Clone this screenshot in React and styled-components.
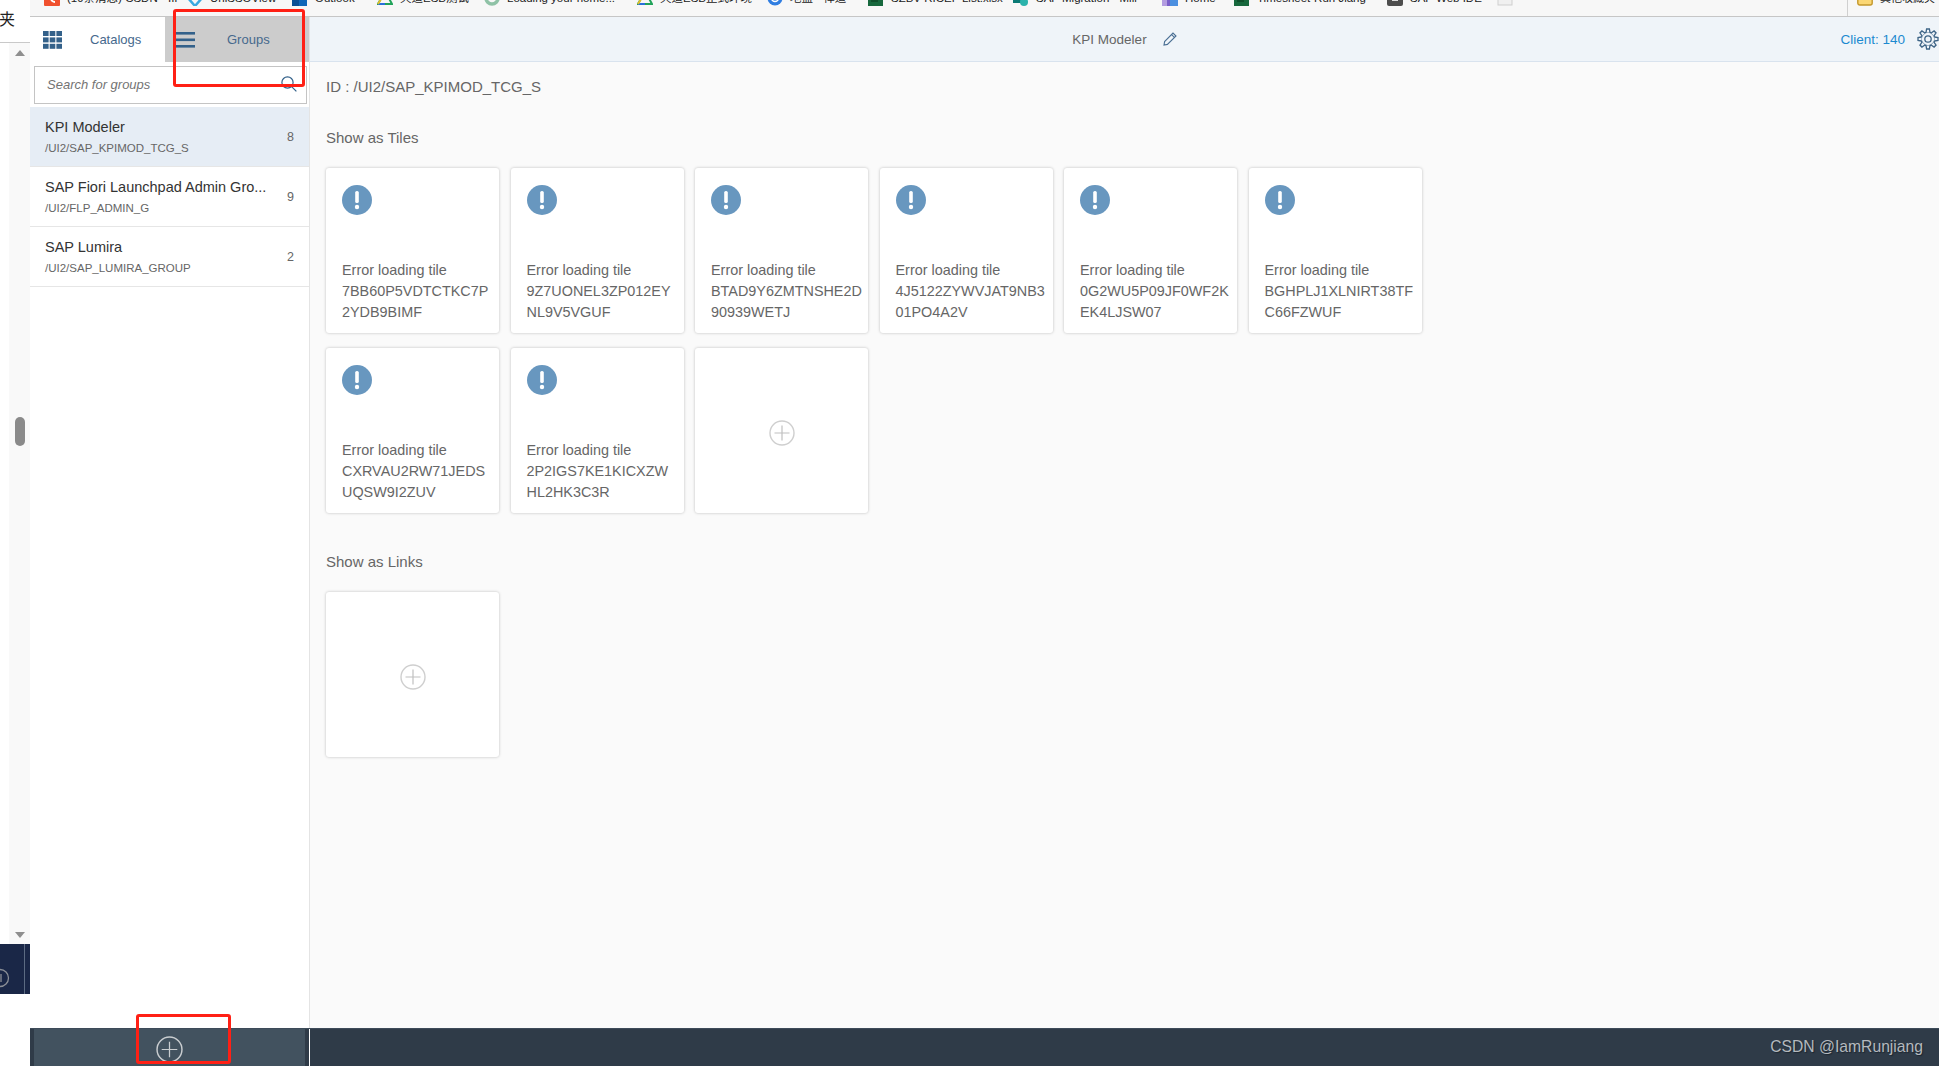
import styled, { createGlobalStyle } from "styled-components";

const FONT = `"Liberation Sans", "Noto Sans CJK SC", sans-serif`;

const GlobalStyle = createGlobalStyle`
    html, body {
        margin: 0;
        padding: 0;
        background: #ffffff;
        font-family: ${FONT};
    }
`;

const Page = styled.div`
    position: relative;
    width: 1939px;
    height: 1066px;
    overflow: hidden;
    display: flex;
`;

const LeftStrip = styled.div`
    flex: none;
    width: 30px;
    display: flex;
    flex-direction: column;
    background: #fff;
`;

const StripTab = styled.div`
    flex: none;
    height: 43px;
    box-sizing: border-box;
    border-bottom: 1px solid #c9c9c9;
    overflow: hidden;
    display: flex;
    justify-content: flex-end;
    padding-right: 15px;
    font-size: 16px;
    line-height: 40px;
    color: #222;
    white-space: nowrap;
`;

const ScrollTrack = styled.div`
    flex: 1;
    margin-left: 9px;
    background: #f9f9f9;
    display: flex;
    flex-direction: column;
    align-items: center;
`;

const ScrollArrow = styled.div`
    flex: none;
    width: 0;
    height: 0;
    border-left: 5px solid transparent;
    border-right: 5px solid transparent;
    ${(props) =>
        props.$down
            ? "border-top: 6px solid #8f8f8f; margin: auto 0 6px;"
            : "border-bottom: 6px solid #8f8f8f; margin-top: 7px;"}
`;

const ScrollThumb = styled.div`
    flex: none;
    width: 10px;
    height: 29px;
    margin-top: 361px;
    border-radius: 5px;
    background: #8a8a8a;
`;

const StripDock = styled.div`
    flex: none;
    height: 50px;
    margin-bottom: 72px;
    background: #1a2747;
    border-right: 5px solid #1a2747;
    box-shadow: inset -1px 0 0 #5c6b82;
    overflow: hidden;
    display: flex;
    align-items: flex-end;
`;

const RightColumn = styled.div`
    flex: 1;
    min-width: 0;
    display: flex;
    flex-direction: column;
`;

/* browser bookmark bar, cut off by the top of the screenshot */
const BookmarkBar = styled.div`
    flex: none;
    height: 16px;
    box-sizing: content-box;
    border-bottom: 1px solid #c6c6c6;
    background: #f7f7f7;
    display: flex;
    align-items: flex-end;
    padding: 0 4px 0 14px;
    overflow: hidden;
`;

const Bookmark = styled.div`
    flex: none;
    width: ${(props) => props.$width}px;
    height: 16px;
    margin-bottom: 10px;
    display: flex;
    align-items: center;
    gap: 7px;
    font-size: ${(props) => props.$size || 11.5}px;
    line-height: 16px;
    color: #222;
    white-space: nowrap;
`;

const BookmarkDivider = styled.div`
    flex: none;
    width: 1px;
    height: 16px;
    margin: 0 9px 0 auto;
    background: #d0d0d0;
`;

const BookmarkIcon = styled.svg`
    flex: none;
    width: 16px;
    height: 16px;
`;

const Workspace = styled.div`
    flex: 1;
    min-height: 0;
    display: flex;
    flex-direction: column;
`;

const Columns = styled.div`
    flex: 1;
    min-height: 0;
    display: flex;
`;

const Sidebar = styled.div`
    flex: none;
    width: 280px;
    box-sizing: border-box;
    border-right: 1px solid #e4e4e4;
    background: #fff;
    display: flex;
    flex-direction: column;
`;

const Tabs = styled.div`
    flex: none;
    height: 45px;
    display: flex;
`;

const Tab = styled.div`
    flex: none;
    box-sizing: border-box;
    width: ${(props) => props.$width}px;
    height: 45px;
    padding-left: ${(props) => props.$pad}px;
    display: flex;
    align-items: center;
    background: ${(props) => (props.$active ? "#cccccc" : "#ffffff")};
    color: #46698d;
    font-size: 13px;
`;

const TabLabel = styled.span`
    margin-left: ${(props) => props.$gap}px;
`;

const SearchBox = styled.div`
    flex: none;
    box-sizing: border-box;
    width: 273px;
    height: 38px;
    margin: 4px 0 3px 4px;
    padding: 0 9px 2px 12px;
    border: 1px solid #c4c4c4;
    display: flex;
    align-items: center;
    justify-content: space-between;
    font-size: 13px;
    font-style: italic;
    color: #737373;
`;

const GroupRow = styled.div`
    flex: none;
    box-sizing: border-box;
    height: 60px;
    padding: 0 15px;
    border-bottom: 1px solid #e6e6e6;
    background: ${(props) => (props.$selected ? "#e6edf5" : "#fff")};
    display: flex;
    align-items: center;
    justify-content: space-between;
`;

const GroupText = styled.div`
    display: flex;
    flex-direction: column;
    gap: 4px;
`;

const GroupTitle = styled.div`
    font-size: 14.5px;
    line-height: 20px;
    color: #333;
    white-space: nowrap;
`;

const GroupPath = styled.div`
    font-size: 11.5px;
    line-height: 15px;
    color: #666;
    white-space: nowrap;
`;

const GroupCount = styled.div`
    font-size: 12.5px;
    color: #666;
`;

const Main = styled.div`
    flex: 1;
    min-width: 0;
    background: #fafafa;
    display: flex;
    flex-direction: column;
`;

const Header = styled.div`
    flex: none;
    box-sizing: border-box;
    height: 45px;
    border-bottom: 1px solid #d9e3ee;
    background: #eff4f9;
    display: grid;
    grid-template-columns: 1fr auto 1fr;
    align-items: center;
`;

const HeaderTitle = styled.div`
    grid-column: 2;
    display: flex;
    align-items: center;
    gap: 16px;
    font-size: 13.5px;
    color: #666;
`;

const HeaderRight = styled.div`
    grid-column: 3;
    justify-self: end;
    display: flex;
    align-items: center;
    gap: 12px;
    font-size: 13.5px;
    color: #1c8ad0;
`;

const Content = styled.div`
    flex: 1;
    min-height: 0;
    padding-left: 16px;
`;

const GroupId = styled.div`
    height: 20px;
    margin-top: 15px;
    font-size: 15px;
    line-height: 20px;
    color: #666;
`;

const SectionTitle = styled.div`
    height: 20px;
    margin-top: ${(props) => props.$top}px;
    font-size: 15px;
    line-height: 20px;
    color: #666;
`;

const TileGrid = styled.div`
    display: grid;
    grid-template-columns: repeat(6, 173px);
    grid-auto-rows: 165px;
    column-gap: 11.5px;
    row-gap: 15px;
    margin-top: ${(props) => props.$top}px;
`;

const Tile = styled.div`
    box-sizing: border-box;
    padding: 17px 0 10px 16px;
    background: #fff;
    border-radius: 3px;
    box-shadow: 0 0 3px rgba(0, 0, 0, 0.25);
    display: flex;
    flex-direction: column;
    justify-content: space-between;
`;

const AddTile = styled(Tile)`
    padding: 5px 0 0;
    align-items: center;
    justify-content: center;
`;

const TileText = styled.div`
    font-size: 14.4px;
    line-height: 21px;
    color: #666;
    white-space: nowrap;
`;

const Footer = styled.div`
    flex: none;
    height: 38px;
    background: #2f3b48;
    border-top: 1px solid #3d4b59;
    box-sizing: border-box;
    display: flex;
`;

const FooterLeft = styled.div`
    flex: none;
    box-sizing: border-box;
    width: 271px;
    margin: 0 4px;
    padding-top: 3px;
    background: #42525f;
    display: flex;
    align-items: center;
    justify-content: center;
`;

const FooterDivider = styled.div`
    flex: none;
    width: 1px;
    background: #fff;
`;

const Watermark = styled.div`
    margin-left: auto;
    padding-right: 16px;
    font-size: 15.7px;
    line-height: 36px;
    color: #b4b9be;
    text-shadow: 1px 1px 1px #1d2630;
`;

const RedMark = styled.div`
    position: absolute;
    box-sizing: border-box;
    left: ${(props) => props.$x}px;
    top: ${(props) => props.$y}px;
    width: ${(props) => props.$w}px;
    height: ${(props) => props.$h}px;
    border: 3px solid #ff2015;
    border-radius: 3px;
`;

function GridIcon() {
    const cells = [];
    for (let r = 0; r < 3; r++) {
        for (let c = 0; c < 3; c++) {
            cells.push(<rect key={r + "" + c} x={c * 6.7} y={r * 6.4} width="5.6" height="5" fill="#33618a" />);
        }
    }
    return (
        <svg width="19" height="18" viewBox="0 0 19 18">
            {cells}
        </svg>
    );
}

function MenuIcon() {
    return (
        <svg width="19" height="16" viewBox="0 0 19 16">
            <rect y="0" width="19" height="2.6" fill="#33618a" />
            <rect y="6.5" width="19" height="2.6" fill="#33618a" />
            <rect y="13" width="19" height="2.6" fill="#33618a" />
        </svg>
    );
}

function SearchIcon() {
    return (
        <svg width="16" height="16" viewBox="0 0 16 16" fill="none" stroke="#33618a" strokeWidth="1.2">
            <circle cx="6.5" cy="6.5" r="5.6" />
            <path d="M10.6 10.6 L15.4 15.4" />
        </svg>
    );
}

function PencilIcon() {
    return (
        <svg width="14" height="14" viewBox="0 0 14 14" fill="none" stroke="#4a6f94" strokeWidth="1.1">
            <path d="M1 13 L1.6 9.6 L10 1 L13 4 L4.4 12.4 Z" />
            <path d="M8.6 2.6 L11.4 5.4" />
        </svg>
    );
}

function GearIcon() {
    const teeth = [0, 45, 90, 135, 180, 225, 270, 315];
    return (
        <svg width="22" height="22" viewBox="0 0 22 22" fill="none" stroke="#3f6587" strokeWidth="1.3">
            <circle cx="11" cy="11" r="3.2" />
            <circle cx="11" cy="11" r="6.8" />
            {teeth.map((a) => (
                <path key={a} d="M9 4.6 L9.6 1 H12.4 L13 4.6" fill="#eff4f9" transform={`rotate(${a} 11 11)`} />
            ))}
        </svg>
    );
}

function ErrorIcon() {
    return (
        <svg width="30" height="30" viewBox="0 0 30 30">
            <circle cx="15" cy="15" r="15" fill="#6897bf" />
            <rect x="13.2" y="6" width="3.6" height="12" rx="1.6" fill="#fff" />
            <circle cx="15" cy="22" r="2.2" fill="#fff" />
        </svg>
    );
}

function PlusCircle({ size, color, lineColor }) {
    return (
        <svg width={size} height={size} viewBox="0 0 26 26" fill="none">
            <circle cx="13" cy="13" r="12" stroke={color} strokeWidth="1.4" />
            <path d="M13 5.5 V20.5 M5.5 13 H20.5" stroke={lineColor} strokeWidth="1.2" />
        </svg>
    );
}

function BarIcon({ kind }) {
    // only the lower edge of these shows below the top of the screenshot
    if (kind === "csdn") {
        return (
            <BookmarkIcon viewBox="0 0 16 16">
                <rect width="16" height="16" rx="1" fill="#f0512e" />
                <path d="M11 12 A4 4 0 1 1 11 4" fill="none" stroke="#fff" strokeWidth="2" />
            </BookmarkIcon>
        );
    }
    if (kind === "diamond") {
        return (
            <BookmarkIcon viewBox="0 0 16 16">
                <path d="M8 16 L1 8 L8 0 L15 8 Z" fill="none" stroke="#39a9e0" strokeWidth="2.5" />
            </BookmarkIcon>
        );
    }
    if (kind === "outlook") {
        return (
            <BookmarkIcon viewBox="0 0 16 16">
                <rect width="15" height="16" fill="#1167b8" />
                <rect width="7" height="16" y="1" fill="#0a4f96" />
            </BookmarkIcon>
        );
    }
    if (kind === "tri") {
        return (
            <BookmarkIcon viewBox="0 0 16 16">
                <path d="M8 1 L15 14 H1 Z" fill="none" stroke="#21a35a" strokeWidth="2" />
                <path d="M1 14 H8" stroke="#2a6fdb" strokeWidth="2" />
                <path d="M1 14 L4 9" stroke="#e2c02c" strokeWidth="2" />
            </BookmarkIcon>
        );
    }
    if (kind === "ring") {
        return (
            <BookmarkIcon viewBox="0 0 16 16">
                <circle cx="8" cy="8" r="6" fill="none" stroke="#8fc2a6" strokeWidth="3.5" />
            </BookmarkIcon>
        );
    }
    if (kind === "blue") {
        return (
            <BookmarkIcon viewBox="0 0 16 16">
                <circle cx="8" cy="8" r="7.5" fill="#2f7de1" />
                <circle cx="8" cy="8" r="3.5" fill="none" stroke="#fff" strokeWidth="1.5" />
            </BookmarkIcon>
        );
    }
    if (kind === "xlsx") {
        return (
            <BookmarkIcon viewBox="0 0 16 16">
                <rect width="15" height="16" fill="#17683d" />
                <rect x="3" y="0" width="7" height="12" fill="#0f4f2c" />
            </BookmarkIcon>
        );
    }
    if (kind === "share") {
        return (
            <BookmarkIcon viewBox="0 0 16 16">
                <rect width="13" height="13" fill="#0b7a75" />
                <circle cx="11" cy="12" r="4" fill="#2bb3ab" />
            </BookmarkIcon>
        );
    }
    if (kind === "home") {
        return (
            <BookmarkIcon viewBox="0 0 16 16">
                <rect width="16" height="16" fill="#7a5fc9" />
                <rect x="8" width="8" height="16" fill="#4b8fe0" />
                <rect width="5" height="16" fill="#b39ce0" />
            </BookmarkIcon>
        );
    }
    if (kind === "sap") {
        return (
            <BookmarkIcon viewBox="0 0 16 16">
                <rect width="16" height="16" rx="2" fill="#4d4d4d" />
                <rect x="5" y="8" width="6" height="3" fill="#ddd" />
            </BookmarkIcon>
        );
    }
    if (kind === "page") {
        return (
            <BookmarkIcon viewBox="0 0 16 16">
                <rect x="1" y="-2" width="14" height="17" fill="#f0f0f0" stroke="#cfcfcf" />
            </BookmarkIcon>
        );
    }
    return (
        <BookmarkIcon viewBox="0 0 16 16">
            <rect x="0.8" y="-3" width="14.4" height="18" rx="2" fill="#fbd774" stroke="#c4982b" strokeWidth="1.4" />
        </BookmarkIcon>
    );
}

const bookmarks = [
    { icon: "csdn", text: "(19条消息) CSDN - III", width: 143 },
    { icon: "diamond", text: "UniSSOView", width: 105 },
    { icon: "outlook", text: "Outlook", width: 85 },
    { icon: "tri", text: "天道ESB测试", width: 107 },
    { icon: "ring", text: "Loading your home...", width: 153 },
    { icon: "tri", text: "天道ESB正式环境", width: 130 },
    { icon: "blue", text: "地盘 - 禅道", width: 101 },
    { icon: "xlsx", text: "SZBV RICEF List.xlsx", width: 145 },
    { icon: "share", text: "SAP Migration - Mill", width: 149 },
    { icon: "home", text: "Home", width: 72 },
    { icon: "xlsx", text: "Timesheet-Run Jiang", width: 153 },
    { icon: "sap", text: "SAP Web IDE", width: 110 },
    { icon: "page", text: "", width: 30 },
];

const groups = [
    { title: "KPI Modeler", path: "/UI2/SAP_KPIMOD_TCG_S", count: 8, selected: true },
    { title: "SAP Fiori Launchpad Admin Gro...", path: "/UI2/FLP_ADMIN_G", count: 9 },
    { title: "SAP Lumira", path: "/UI2/SAP_LUMIRA_GROUP", count: 2 },
];

const tiles = [
    ["7BB60P5VDTCTKC7P", "2YDB9BIMF"],
    ["9Z7UONEL3ZP012EY", "NL9V5VGUF"],
    ["BTAD9Y6ZMTNSHE2D", "90939WETJ"],
    ["4J5122ZYWVJAT9NB3", "01PO4A2V"],
    ["0G2WU5P09JF0WF2K", "EK4LJSW07"],
    ["BGHPLJ1XLNIRT38TF", "C66FZWUF"],
    ["CXRVAU2RW71JEDS", "UQSW9I2ZUV"],
    ["2P2IGS7KE1KICXZW", "HL2HK3C3R"],
];

function App() {
    return (
        <Page>
            <GlobalStyle />
            <LeftStrip>
                <StripTab>藏夹</StripTab>
                <ScrollTrack>
                    <ScrollArrow />
                    <ScrollThumb />
                    <ScrollArrow $down />
                </ScrollTrack>
                <StripDock>
                    <svg width="10" height="30" viewBox="0 0 10 30" fill="none" stroke="#8b8f96" strokeWidth="1.3">
                        <circle cx="0" cy="14" r="8.5" />
                        <path d="M1 10 V18" />
                    </svg>
                </StripDock>
            </LeftStrip>
            <RightColumn>
                <BookmarkBar>
                    {bookmarks.map((b, i) => (
                        <Bookmark key={i} $width={b.width}>
                            <BarIcon kind={b.icon} />
                            {b.text && <span>{b.text}</span>}
                        </Bookmark>
                    ))}
                    <BookmarkDivider />
                    <Bookmark $width={78} $size={11}>
                        <BarIcon kind="folder" />
                        <span>其他收藏夹</span>
                    </Bookmark>
                </BookmarkBar>
                <Workspace>
                    <Columns>
                        <Sidebar>
                            <Tabs>
                                <Tab $width={135} $pad={13}>
                                    <GridIcon />
                                    <TabLabel $gap={28}>Catalogs</TabLabel>
                                </Tab>
                                <Tab $width={144} $pad={11} $active>
                                    <MenuIcon />
                                    <TabLabel $gap={32}>Groups</TabLabel>
                                </Tab>
                            </Tabs>
                            <SearchBox>
                                <span>Search for groups</span>
                                <SearchIcon />
                            </SearchBox>
                            {groups.map((g) => (
                                <GroupRow key={g.path} $selected={g.selected}>
                                    <GroupText>
                                        <GroupTitle>{g.title}</GroupTitle>
                                        <GroupPath>{g.path}</GroupPath>
                                    </GroupText>
                                    <GroupCount>{g.count}</GroupCount>
                                </GroupRow>
                            ))}
                        </Sidebar>
                        <Main>
                            <Header>
                                <HeaderTitle>
                                    KPI Modeler
                                    <PencilIcon />
                                </HeaderTitle>
                                <HeaderRight>
                                    Client: 140
                                    <GearIcon />
                                </HeaderRight>
                            </Header>
                            <Content>
                                <GroupId>ID : /UI2/SAP_KPIMOD_TCG_S</GroupId>
                                <SectionTitle $top={31}>Show as Tiles</SectionTitle>
                                <TileGrid $top={20}>
                                    {tiles.map((lines) => (
                                        <Tile key={lines[0]}>
                                            <ErrorIcon />
                                            <TileText>
                                                Error loading tile
                                                <br />
                                                {lines[0]}
                                                <br />
                                                {lines[1]}
                                            </TileText>
                                        </Tile>
                                    ))}
                                    <AddTile>
                                        <PlusCircle size={26} color="#cfcfcf" lineColor="#c0c0c0" />
                                    </AddTile>
                                </TileGrid>
                                <SectionTitle $top={39}>Show as Links</SectionTitle>
                                <TileGrid $top={20}>
                                    <AddTile>
                                        <PlusCircle size={26} color="#cfcfcf" lineColor="#c0c0c0" />
                                    </AddTile>
                                </TileGrid>
                            </Content>
                        </Main>
                    </Columns>
                    <Footer>
                        <FooterLeft>
                            <PlusCircle size={27} color="#c9cdd0" lineColor="#c9cdd0" />
                        </FooterLeft>
                        <FooterDivider />
                        <Watermark>CSDN @IamRunjiang</Watermark>
                    </Footer>
                </Workspace>
            </RightColumn>
            <RedMark $x={173} $y={9} $w={132} $h={78} />
            <RedMark $x={136} $y={1014} $w={95} $h={50} />
        </Page>
    );
}

export default App;
